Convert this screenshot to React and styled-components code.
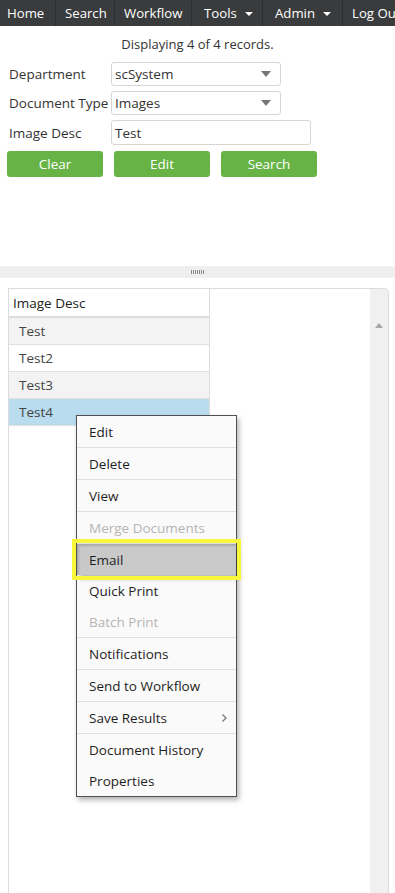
import React from "react";
import styled, { createGlobalStyle } from "styled-components";

const Global = createGlobalStyle`
  html, body { margin: 0; padding: 0; background: #fff; }
  body { font-family: "Open Sans", "Noto Sans", sans-serif; color: #333; overflow: hidden; }
  * { box-sizing: border-box; }
`;

const Page = styled.div`
  width: 395px;
  height: 893px;
  display: flex;
  flex-direction: column;
  position: relative;
  overflow: hidden;
`;

const Nav = styled.nav`
  height: 26px;
  background: #3a3b3d;
  display: flex;
  flex: none;
  white-space: nowrap;
  overflow: hidden;
`;

const NavItem = styled.div`
  display: flex;
  align-items: center;
  flex: none;
  gap: 8px;
  width: ${(p) => (p.$w ? `${p.$w}px` : "auto")};
  padding: 0 0 0 ${(p) => p.$pl || 9}px;
  color: #fff;
  font-size: 13.2px;
  border-right: 1px solid #2b2c2e;
  height: 100%;
  &:last-child { border-right: none; }
`;

const Caret = styled.span`
  width: 0;
  height: 0;
  border-left: 4px solid transparent;
  border-right: 4px solid transparent;
  border-top: 4px solid #fff;
  margin-top: 2px;
`;

const TopPanel = styled.section`
  height: 240px;
  flex: none;
  padding: 9px 0 0 0;
`;

const Status = styled.div`
  text-align: center;
  font-size: 13px;
  line-height: 18px;
  color: #333;
  margin-bottom: 9px;
`;

const Form = styled.div`
  display: grid;
  grid-template-columns: 102px 200px;
  row-gap: 5px;
  align-items: center;
  justify-items: start;
  padding-left: 9px;
`;

const Label = styled.div`
  font-size: 13.5px;
  color: #333;
  white-space: nowrap;
`;

const Field = styled.div`
  width: ${(p) => p.$w}px;
  height: ${(p) => p.$h}px;
  border: 1px solid #d6d6d6;
  border-radius: 3px;
  display: flex;
  align-items: center;
  justify-content: space-between;
  padding: 0 9px 0 3px;
  font-size: 13.5px;
  color: #333;
  background: #fff;
`;

const SelectArrow = styled.span`
  width: 0;
  height: 0;
  border-left: 5px solid transparent;
  border-right: 5px solid transparent;
  border-top: 6px solid #777;
`;

const Buttons = styled.div`
  display: flex;
  gap: 11px;
  padding-left: 7px;
  margin-top: 6px;
`;

const Button = styled.button`
  width: 96px;
  height: 26px;
  background: #67b346;
  color: #fff;
  border: none;
  border-radius: 3px;
  font-family: inherit;
  font-size: 13.5px;
  padding: 0;
`;

const Splitter = styled.div`
  height: 12px;
  flex: none;
  background: #efefef;
  display: flex;
  align-items: center;
  justify-content: center;
`;

const Grip = styled.div`
  width: 14px;
  height: 4px;
  background: repeating-linear-gradient(90deg, #888 0 1px, transparent 1px 2px);
`;

const GridArea = styled.div`
  flex: 1;
  padding: 10px 6px 0 8px;
  display: flex;
  position: relative;
`;

const GridPanel = styled.div`
  flex: 1;
  border: 1px solid #dcdcdc;
  border-bottom: none;
  border-radius: 0 5px 0 0;
  display: flex;
  overflow: hidden;
`;

const Column = styled.div`
  width: 201px;
  display: flex;
  flex-direction: column;
`;

const HeaderCell = styled.div`
  height: 29px;
  border-bottom: 2px solid #dcdcdc;
  border-right: 1px solid #dcdcdc;
  font-size: 13.5px;
  color: #222;
  display: flex;
  align-items: center;
  padding-left: 4px;
`;

const Cell = styled.div`
  height: 27px;
  border-bottom: 1px solid #e0e0e0;
  border-right: 1px solid #dcdcdc;
  background: ${(p) => (p.$selected ? "#b9dcee" : p.$alt ? "#f3f3f3" : "#fff")};
  font-size: 13.5px;
  color: #444;
  display: flex;
  align-items: center;
  padding-left: 10px;
`;

const Spacer = styled.div`
  flex: 1;
`;

const Scrollbar = styled.div`
  width: 18px;
  background: #f0f0f0;
  display: flex;
  justify-content: center;
  padding-top: 34px;
`;

const UpArrow = styled.span`
  width: 0;
  height: 0;
  border-left: 4px solid transparent;
  border-right: 4px solid transparent;
  border-bottom: 5px solid #a6a6a6;
`;

const Menu = styled.ul`
  position: absolute;
  left: 76px;
  top: 415px;
  width: 161px;
  margin: 0;
  padding: 0;
  list-style: none;
  background: #fafafa;
  border: 1px solid #505050;
  box-shadow: 2px 3px 5px rgba(0, 0, 0, 0.3);
`;

const MenuItem = styled.li`
  height: ${(p) => (p.$sep ? 32 : 31)}px;
  display: flex;
  align-items: center;
  justify-content: space-between;
  padding: 0 8px 0 12px;
  font-size: 13.5px;
  color: ${(p) => (p.$disabled ? "#b5b5b5" : "#1e1e1e")};
  border-bottom: ${(p) => (p.$sep ? "1px solid #e0e0e0" : "none")};
  position: relative;
  ${(p) =>
    p.$highlight &&
    `
    background: #c9c9c9;
    outline: 4px solid #f8f83a;
    outline-offset: 1px;
    box-shadow: inset 2px 2px 2px rgba(0,0,0,0.15), 3px 4px 4px rgba(0,0,0,0.25);
    z-index: 1;
    border-bottom: none;
  `}
`;

const Chevron = () => (
  <svg width="7" height="10" viewBox="0 0 7 10">
    <path d="M1.5 1.5 L5 5 L1.5 8.5" fill="none" stroke="#777" strokeWidth="1.3" />
  </svg>
);

const rows = ["Test", "Test2", "Test3", "Test4"];

const menu = [
  { t: "Edit", sep: true },
  { t: "Delete", sep: true },
  { t: "View", sep: true },
  { t: "Merge Documents", disabled: true, sep: true },
  { t: "Email", highlight: true },
  { t: "Quick Print" },
  { t: "Batch Print", disabled: true, sep: true },
  { t: "Notifications", sep: true },
  { t: "Send to Workflow", sep: true },
  { t: "Save Results", sep: true, sub: true },
  { t: "Document History" },
  { t: "Properties" },
];

export default function App() {
  return (
    <Page>
      <Global />
      <Nav>
        <NavItem $w={56} $pl={7}>Home</NavItem>
        <NavItem $w={59}>Search</NavItem>
        <NavItem $w={77}>Workflow</NavItem>
        <NavItem $w={71} $pl={12}>Tools<Caret /></NavItem>
        <NavItem $w={80} $pl={12}>Admin<Caret /></NavItem>
        <NavItem $pl={9}>Log Out</NavItem>
      </Nav>
      <TopPanel>
        <Status>Displaying 4 of 4 records.</Status>
        <Form>
          <Label>Department</Label>
          <Field $w={170} $h={24}>scSystem<SelectArrow /></Field>
          <Label>Document Type</Label>
          <Field $w={170} $h={24}>Images<SelectArrow /></Field>
          <Label>Image Desc</Label>
          <Field $w={200} $h={25}>Test</Field>
        </Form>
        <Buttons>
          <Button>Clear</Button>
          <Button>Edit</Button>
          <Button>Search</Button>
        </Buttons>
      </TopPanel>
      <Splitter>
        <Grip />
      </Splitter>
      <GridArea>
        <GridPanel>
          <Column>
            <HeaderCell>Image Desc</HeaderCell>
            {rows.map((r, i) => (
              <Cell key={r} $alt={i % 2 === 0} $selected={i === 3}>
                {r}
              </Cell>
            ))}
          </Column>
          <Spacer />
          <Scrollbar>
            <UpArrow />
          </Scrollbar>
        </GridPanel>
      </GridArea>
      <Menu>
        {menu.map((m) => (
          <MenuItem key={m.t} $sep={m.sep} $disabled={m.disabled} $highlight={m.highlight}>
            {m.t}
            {m.sub && <Chevron />}
          </MenuItem>
        ))}
      </Menu>
    </Page>
  );
}
